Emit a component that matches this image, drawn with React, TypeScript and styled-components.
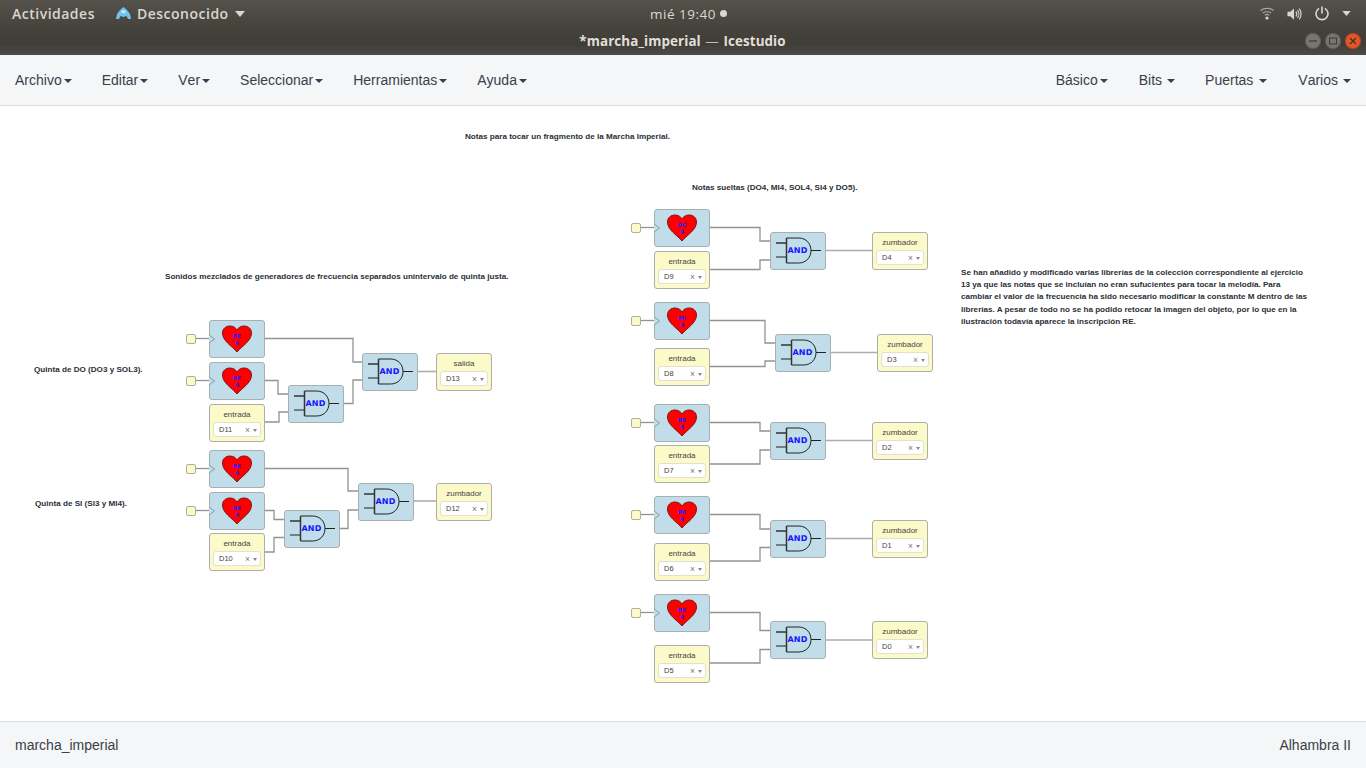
import React from "react";
import styled, { createGlobalStyle } from "styled-components";

const Global = createGlobalStyle`
  html, body { margin: 0; padding: 0; width: 1366px; height: 768px; overflow: hidden; background: #fff; }
  * { box-sizing: border-box; }
`;
const Page = styled.div`
  width: 1366px; height: 768px; display: flex; flex-direction: column;
  font-family: "Liberation Sans", Arial, sans-serif; color: #333;
`;
const Panel = styled.div`
  height: 27px; flex: none; display: flex; align-items: center; padding: 0 15px 0 12px; position: relative;
  background: linear-gradient(#55524b, #45433c);
  font-family: "Open Sans", "Noto Sans", sans-serif; font-weight: 600; font-size: 14px; letter-spacing: .5px; color: #d8d7d2;
`;
const PanelApp = styled.div`
  display: flex; align-items: center; gap: 6px; margin-left: 21px;
`;
const Clock = styled.div`
  position: absolute; left: 650px; top: 0; height: 27px; display: flex; align-items: center; gap: 4px; font-size: 13.5px; font-weight: 500;
`;
const Dot = styled.span`width: 7px; height: 7px; border-radius: 50%; background: #d8d7d2;`;
const Tray = styled.div`
  margin-left: auto; display: flex; align-items: center; gap: 13px;
`;
const TitleBar = styled.div`
  height: 28px; flex: none; display: flex; align-items: center; justify-content: center; position: relative;
  background: linear-gradient(#45433c, #3f3d37 60%, #4d4b45);
  color: #e2dfd8;
`;
const TitleText = styled.span`
  font-family: "Open Sans", "Noto Sans", sans-serif; font-weight: 700; font-size: 13.4px; letter-spacing: .1px; margin-left: -1px;
  span { color: #bdbbb5; font-weight: 400; margin: 0 1px; }
`;
const WinButtons = styled.div`
  position: absolute; right: 5px; top: 6px; display: flex; gap: 4px;
`;
const WinBtn = styled.span<{ $c: string }>`
  width: 16px; height: 16px; border-radius: 50%; background: ${p => p.$c};
  display: flex; align-items: center; justify-content: center; box-shadow: inset 0 0 0 1px rgba(0,0,0,.18);
`;
const MenuBar = styled.nav`
  height: 51px; flex: none; display: flex; align-items: center; background: #f5f6f8; border-bottom: 1px solid #dcdee2;
  padding: 0 15px; font-size: 14px; color: #3a4048; font-kerning: none;
`;
const MenuItem = styled.span<{ $gap?: number; $mr: number }>`
  display: inline-flex; align-items: center; margin-right: ${p => p.$mr}px;
  i { display: inline-block; width: 0; height: 0; margin-left: ${p => p.$gap ?? 2}px; margin-top: 2px;
      border-left: 4px solid transparent; border-right: 4px solid transparent; border-top: 4px solid #3a4048; }
`;
const Spacer = styled.div`flex: 1;`;
const Canvas = styled.main`flex: 1; position: relative; background: #fff; overflow: hidden;`;
const Wires = styled.svg`position: absolute; left: 0; top: 0;`;
const Note = styled.div<{ $x: number; $y: number; $w?: number }>`
  position: absolute; left: ${p => p.$x}px; top: ${p => p.$y - 105}px; ${p => p.$w ? `width:${p.$w}px;` : "white-space:nowrap;"}
  font-size: 8.12px; font-weight: 700; line-height: 12.45px; color: #2b2f36;
`;
const Node = styled.div<{ $x: number; $y: number; $kind: "blue" | "yellow" }>`
  position: absolute; left: ${p => p.$x}px; top: ${p => p.$y - 106}px; width: 56px; height: 38px;
  border: 1px solid #a9aeae; border-radius: 3px;
  background: ${p => p.$kind === "blue" ? "#c1dde9" : "#fdfac9"};
`;
const Port = styled.div<{ $x: number; $y: number }>`
  position: absolute; left: ${p => p.$x}px; top: ${p => p.$y - 106}px; width: 10px; height: 10px;
  border: 1px solid #b0b09a; border-radius: 2px; background: #fdfac9;
`;
const NodeLabel = styled.div`
  text-align: center; font-size: 8px; line-height: 9px; margin-top: 5px; color: #444;
`;
const Select = styled.div`
  position: absolute; left: 3px; right: 3px; top: 17px; height: 15px; background: #fff; border: 1px solid #e2e0cf; border-radius: 3px;
  display: flex; align-items: center; padding: 0 3px 0 5px; font-size: 7.5px; color: #444;
  span { flex: 1; }
  em { font-style: normal; color: #777; font-size: 8.5px; line-height: 8px; margin-right: 3px; }
  i { width: 0; height: 0; border-left: 2.5px solid transparent; border-right: 2.5px solid transparent; border-top: 3px solid #888; margin-top: 1px; }
`;
const Footer = styled.footer`
  height: 47px; flex: none; display: flex; justify-content: space-between; align-items: center; padding: 0 15px;
  background: #f5f6f8; border-top: 1px solid #dcdee2; font-size: 14px; color: #3a4048;
`;
const Glyph = styled.svg`position: absolute; left: 0; top: 0; overflow: visible; text-rendering: geometricPrecision;`;

const Heart = ({ a, b, input }: { a: string; b: string; input: boolean }) => (
  <Glyph width="54" height="36" viewBox="0 0 54 36">
    {input && <path d="M-1 14 L4.5 18 L-1 22" fill="#c1dde9" stroke="#8c9aa0" strokeWidth="1" />}
    <path d="M27 31 C22 25 12.5 20 12.5 12 C12.5 7.5 16 5 20 5 C23.5 5 26 7 27 9 C28 7 30.5 5 34 5 C38 5 41.5 7.5 41.5 12 C41.5 20 32 25 27 31 Z" fill="#f00" stroke="#7a1a1a" strokeWidth="1" />
    <text x="27" y="17" textAnchor="middle" fontFamily="DejaVu Sans" fontWeight="700" fontSize="5.6" fill="#2a1cff">{a}</text>
    <text x="27" y="23.5" textAnchor="middle" fontFamily="DejaVu Sans" fontWeight="700" fontSize="6" fill="#2a1cff">{b}</text>
  </Glyph>
);
const Gate = () => (
  <Glyph width="54" height="36" viewBox="0 0 54 36">
    <path d="M5 10H15" stroke="#333" strokeWidth="1.5" fill="none" />
    <path d="M5 24H15 M40 17.5H50" stroke="#222" strokeWidth="1" fill="none" />
    <path d="M15.5 5 H27.5 C35.5 5 40 11 40 17.5 C40 24 35.5 30 27.5 30 H15.5 Z" fill="#c1dde9" stroke="#222" strokeWidth="1" />
    <path d="M15.5 5V30" stroke="#333" strokeWidth="1.5" />
    <text x="26.5" y="20.4" textAnchor="middle" fontFamily="DejaVu Sans" fontWeight="700" fontSize="8" letterSpacing=".1" fill="#1414ff">AND</text>
  </Glyph>
);

type N = { x: number; y: number };
const hearts: (N & { a: string })[] = [
  { x: 209, y: 320, a: "RE" }, { x: 209, y: 362, a: "RE" },
  { x: 209, y: 450, a: "RE" }, { x: 209, y: 492, a: "RE" },
  { x: 654, y: 209, a: "DO" }, { x: 654, y: 302, a: "MI" },
  { x: 654, y: 404, a: "RE" }, { x: 654, y: 496, a: "RE" },
  { x: 654, y: 594, a: "RE" },
];
const yellows: (N & { l: string; v: string })[] = [
  { x: 209, y: 404, l: "entrada", v: "D11" }, { x: 209, y: 533, l: "entrada", v: "D10" },
  { x: 654, y: 251, l: "entrada", v: "D9" }, { x: 654, y: 348, l: "entrada", v: "D8" },
  { x: 654, y: 445, l: "entrada", v: "D7" }, { x: 654, y: 543, l: "entrada", v: "D6" },
  { x: 654, y: 645, l: "entrada", v: "D5" },
  { x: 436, y: 353, l: "salida", v: "D13" }, { x: 436, y: 483, l: "zumbador", v: "D12" },
  { x: 872, y: 232, l: "zumbador", v: "D4" }, { x: 877, y: 334, l: "zumbador", v: "D3" },
  { x: 872, y: 422, l: "zumbador", v: "D2" }, { x: 872, y: 520, l: "zumbador", v: "D1" },
  { x: 872, y: 621, l: "zumbador", v: "D0" },
];
const gates: N[] = [
  { x: 288, y: 385 }, { x: 362, y: 353 }, { x: 284, y: 510 }, { x: 358, y: 483 },
  { x: 770, y: 232 }, { x: 775, y: 334 }, { x: 770, y: 422 }, { x: 770, y: 520 }, { x: 770, y: 621 },
];
const h = (x: number, y: number, mid: number, x2: number, y2: number) =>
  `M${x} ${y}H${mid}V${y2}H${x2}`;
const routes: string[] = [
  h(265, 338.5, 353, 362, 362), h(265, 380.5, 278, 288, 394), h(265, 422, 279, 288, 412),
  h(344, 403.5, 353, 362, 380),
  h(265, 468.5, 348, 358, 491), h(265, 510.5, 274, 284, 519.5), h(265, 552, 274, 284, 537.5),
  h(340, 528.5, 348, 358, 510),
  h(710, 227.5, 760, 770, 241), h(710, 269.5, 760, 770, 260),
  h(710, 320.5, 765, 775, 343), h(710, 366.5, 765, 775, 361),
  h(710, 422.5, 760, 770, 431), h(710, 464, 760, 770, 450),
  h(710, 514.5, 760, 770, 529), h(710, 561, 760, 770, 547.5),
  h(710, 612.5, 760, 770, 630.5), h(710, 663, 760, 770, 649.5),
  ...hearts.map(n => `M${n.x - 14} ${n.y + 18.5}H${n.x + 1}`),
];
const outs: string[] = [
  "M418 371.5H436", "M414 501H436", "M826 250.5H872", "M831 352.5H877",
  "M826 440.5H872", "M826 538.5H872", "M826 640H872",
];

export default function App() {
  return (
    <Page>
      <Global />
      <Panel>
        <span>Actividades</span>
        <PanelApp>
          <svg width="15" height="13" viewBox="0 0 15 13">
            <path d="M0 12 L1 7 L4 3 L7.5 0 L11 3 L14 7 L15 12 L12 12 L10.5 9 L7.5 10 L4.5 9 L3 12 Z" fill="#6fc3ee" />
            <path d="M5.5 3.5 H9.5 V6 H5.5 Z" fill="#cdebf8" />
          </svg>
          <span>Desconocido</span>
          <svg width="10" height="6" viewBox="0 0 10 6"><path d="M0 0H10L5 6Z" fill="#d8d7d2" /></svg>
        </PanelApp>
        <Clock><span>mié 19:40</span><Dot /></Clock>
        <Tray>
          <svg width="14" height="13" viewBox="0 0 14 13" fill="none" stroke="#a8a7a2" strokeWidth="1.2">
            <path d="M.5 3.5 C4 .6 10 .6 13.5 3.5 M2.8 6 C5 4.3 9 4.3 11.2 6 M4.8 8.2 C6 7.3 8 7.3 9.2 8.2" />
            <circle cx="7" cy="11" r="1.6" fill="#d8d7d2" stroke="none" />
          </svg>
          <svg width="15" height="14" viewBox="0 0 16 14" fill="none">
            <path d="M0.5 4.5H3.5L7.5 1V13L3.5 9.5H0.5Z" fill="#d8d7d2" />
            <path d="M9.5 4.5C10.7 6 10.7 8 9.5 9.5M11.2 2.8C13.2 5.2 13.2 8.8 11.2 11.2M13 1.2C15.7 4.5 15.7 9.5 13 12.8" stroke="#d8d7d2" strokeWidth="1.2" />
          </svg>
          <svg width="14" height="15" viewBox="0 0 14 15" fill="none" stroke="#d8d7d2" strokeWidth="1.6" strokeLinecap="round">
            <path d="M7 1V7M3.5 2.8A6 6 0 1 0 10.5 2.8" />
          </svg>
          <svg width="9" height="5" viewBox="0 0 10 6"><path d="M0 0H10L5 6Z" fill="#d8d7d2" /></svg>
        </Tray>
      </Panel>
      <TitleBar>
        <TitleText>*marcha_imperial <span>—</span> Icestudio</TitleText>
        <WinButtons>
          <WinBtn $c="#77756f"><svg width="8" height="8"><path d="M0 4H8" stroke="#3d3b36" strokeWidth="1.2" /></svg></WinBtn>
          <WinBtn $c="#77756f"><svg width="8" height="8"><rect x=".5" y="1" width="7" height="6" fill="none" stroke="#3d3b36" /></svg></WinBtn>
          <WinBtn $c="#e2572a"><svg width="8" height="8"><path d="M1 1L7 7M7 1L1 7" stroke="#43301f" strokeWidth="1.2" /></svg></WinBtn>
        </WinButtons>
      </TitleBar>
      <MenuBar>
        <MenuItem $mr={30}>Archivo<i /></MenuItem>
        <MenuItem $mr={30}>Editar<i /></MenuItem>
        <MenuItem $mr={30}>Ver<i /></MenuItem>
        <MenuItem $mr={30}>Seleccionar<i /></MenuItem>
        <MenuItem $mr={30}>Herramientas<i /></MenuItem>
        <MenuItem $mr={30}>Ayuda<i /></MenuItem>
        <Spacer />
        <MenuItem $mr={31}>Básico<i /></MenuItem>
        <MenuItem $mr={30} $gap={5}>Bits<i /></MenuItem>
        <MenuItem $mr={31} $gap={6}>Puertas<i /></MenuItem>
        <MenuItem $mr={0} $gap={5}>Varios<i /></MenuItem>
      </MenuBar>
      <Canvas>
        <Wires width="1366" height="616" viewBox="0 106 1366 616" fill="none">
          {routes.map((d, i) => <path key={i} d={d} stroke="#929292" strokeWidth="1.3" />)}
          {outs.map((d, i) => <path key={i} d={d} stroke="#adadad" strokeWidth="1.6" />)}
        </Wires>
        <Note $x={465} $y={130}>Notas para tocar un fragmento de la Marcha Imperial.</Note>
        <Note $x={692} $y={181}>Notas sueltas (DO4, MI4, SOL4, SI4 y DO5).</Note>
        <Note $x={165} $y={270}>Sonidos mezclados de generadores de frecuencia separados unintervalo de quinta justa.</Note>
        <Note $x={34} $y={363}>Quinta de DO (DO3 y SOL3).</Note>
        <Note $x={35} $y={497}>Quinta de SI (SI3 y MI4).</Note>
        <Note $x={961} $y={265.5} $w={349}>
          Se han añadido y modificado varias librerías de la colección correspondiente al ejercicio 13 ya que las notas que se incluían no eran sufucientes para tocar la melodía. Para cambiar el valor de la frecuencia ha sido necesario modificar la constante M dentro de las librerías. A pesar de todo no se ha podido retocar la imagen del objeto, por lo que en la ilustración todavía aparece la inscripción RE.
        </Note>
        {hearts.map((n, i) => (
          <React.Fragment key={i}>
            <Port $x={n.x - 23} $y={n.y + 14} />
            <Node $x={n.x} $y={n.y} $kind="blue"><Heart a={n.a} b="4" input /></Node>
          </React.Fragment>
        ))}
        {gates.map((n, i) => <Node key={i} $x={n.x} $y={n.y} $kind="blue"><Gate /></Node>)}
        {yellows.map((n, i) => (
          <Node key={i} $x={n.x} $y={n.y} $kind="yellow">
            <NodeLabel>{n.l}</NodeLabel>
            <Select><span>{n.v}</span><em>×</em><i /></Select>
          </Node>
        ))}
      </Canvas>
      <Footer><span>marcha_imperial</span><span>Alhambra II</span></Footer>
    </Page>
  );
}
